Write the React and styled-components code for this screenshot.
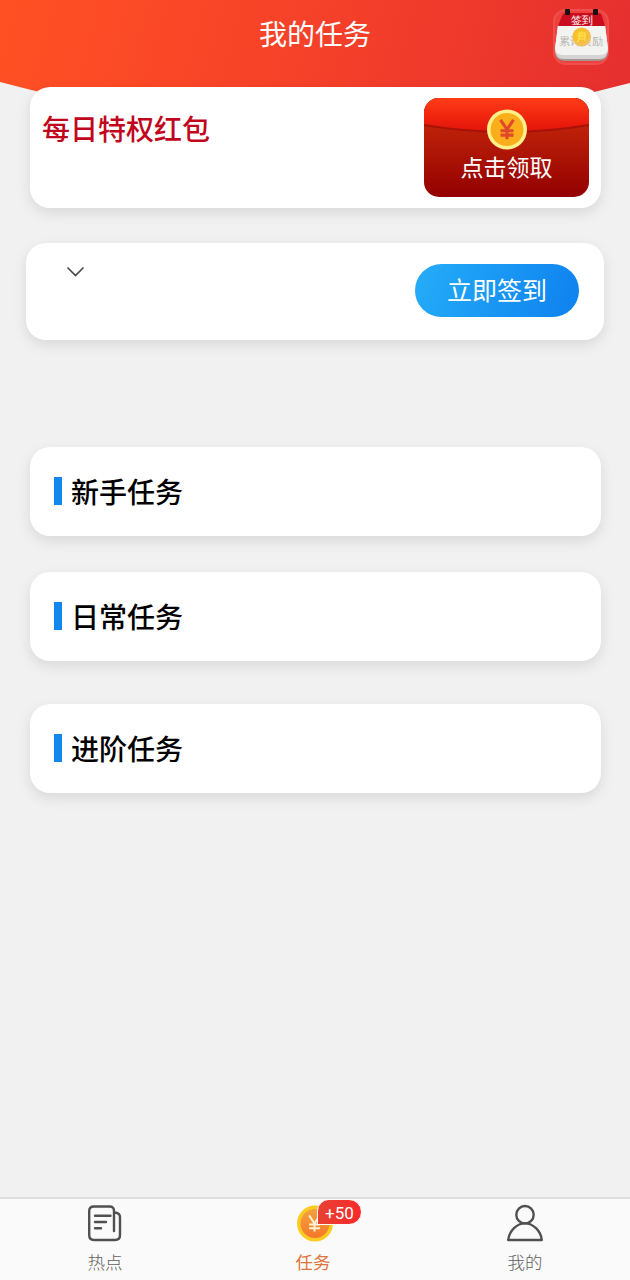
import React from 'react';
import styled, { createGlobalStyle } from 'styled-components';

const GlobalStyle = createGlobalStyle`
  * {
    box-sizing: border-box;
  }

  body {
    margin: 0;
    background: #f1f1f1;
    font-family: Roboto, "Noto Sans CJK SC", sans-serif;
  }
`;

const Page = styled.div`
  display: flex;
  flex-direction: column;
  height: 1280px;
  background: #f1f1f1;
  overflow: hidden;
`;

const Header = styled.header`
  position: relative;
  flex: none;
  display: flex;
  justify-content: center;
  height: 87px;
  padding-top: 15px;
`;

const HeaderBackdrop = styled.svg`
  position: absolute;
  top: 0;
  left: 0;
`;

const HeaderTitle = styled.h1`
  position: relative;
  margin: 0;
  color: #fff;
  font-size: 28px;
  line-height: 41px;
  font-weight: 400;
`;

const CalendarButton = styled.button`
  position: absolute;
  top: 6px;
  right: 19px;
  padding: 0;
  border: none;
  background: none;
  line-height: 0;
`;

const Content = styled.main`
  position: relative;
  flex: 1;
  display: flex;
  flex-direction: column;
`;

const Card = styled.section`
  display: flex;
  background: #fff;
  border-radius: 20px;
  box-shadow: 0 5px 14px rgba(0, 0, 0, 0.1);
`;

const RedPacketCard = styled(Card)`
  justify-content: space-between;
  height: 121px;
  margin: 0 29px 0 30px;
  padding: 11px 12px;
`;

const RedPacketTitle = styled.h2`
  margin: 12px 0 0;
  color: #c1071e;
  font-size: 28px;
  line-height: 41px;
  font-weight: 500;
`;

const RedPacketButton = styled.button`
  position: relative;
  display: flex;
  flex-direction: column;
  align-items: center;
  width: 165px;
  height: 99px;
  padding: 11px 0 0;
  border: none;
  border-radius: 15px;
  background: linear-gradient(#bd2109 30%, #930000);
  color: #fff;
  font-family: inherit;
  font-size: 23px;
  line-height: 34px;
  overflow: hidden;
`;

const PacketFlap = styled.svg`
  position: absolute;
  top: 0;
  left: 0;
`;

const PacketCoin = styled.svg`
  position: relative;
  flex: none;
`;

const PacketLabel = styled.span`
  position: relative;
  margin-top: 2px;
`;

const SignCard = styled(Card)`
  justify-content: space-between;
  height: 97px;
  margin: 35px 26px 0;
  padding: 21px 25px 0 40px;
`;

const SignButton = styled.button`
  width: 164px;
  height: 53px;
  padding: 3px 0 0;
  border: none;
  border-radius: 27px;
  background: linear-gradient(110deg, #24abf8 5%, #1085ef 90%);
  color: #fff;
  font-family: inherit;
  font-size: 25px;
  line-height: 50px;
`;

const TaskCard = styled(Card)`
  align-items: flex-start;
  height: 89px;
  margin: ${props => props.$gap}px 29px 0 30px;
  padding: 27px 0 0 24px;
`;

const TaskMarker = styled.span`
  width: 8px;
  height: 28px;
  margin: 3px 9px 0 0;
  background: #1487ee;
`;

const TaskTitle = styled.h2`
  margin: 0;
  color: #000;
  font-size: 28px;
  line-height: 40px;
  font-weight: 500;
`;

const TabBar = styled.nav`
  flex: none;
  display: grid;
  grid-template-columns: repeat(3, 1fr);
  height: 83px;
  border-top: 2px solid #dedede;
  background: #fafafa;
`;

const Tab = styled.a`
  display: flex;
  flex-direction: column;
  align-items: center;
  padding-top: 5px;
  color: ${props => (props.$active ? '#e0733a' : '#606060')};
  font-size: 17.5px;
  line-height: 26px;
  font-weight: ${props => (props.$active ? 400 : 300)};
`;

const TabIcon = styled.div`
  position: relative;
  height: 46px;
  line-height: 0;
`;

const TabLabel = styled.span`
  position: relative;
  left: ${props => props.$shift || 0}px;
`;

const Badge = styled.span`
  position: absolute;
  top: -5px;
  left: 21px;
  width: 45px;
  height: 26px;
  border: 1px solid #fafafa;
  border-radius: 12px 13px 13px 0;
  background: linear-gradient(100deg, #e64133, #fb2a2a);
  color: #fff;
  font-size: 17px;
  line-height: 26px;
  text-align: center;
`;

const CalendarIcon = () => (
  <svg width="60" height="60" viewBox="0 0 60 60">
    <defs>
      <radialGradient id="calendarCoin" cx="0.45" cy="0.4">
        <stop offset="0" stopColor="#ffd42a" />
        <stop offset="0.65" stopColor="#f6bd2c" />
        <stop offset="1" stopColor="#f0c25e" />
      </radialGradient>
    </defs>
    <rect x="3" y="4" width="54" height="54" rx="12" fill="#ee403d" stroke="#ef504d" strokeWidth="2" />
    <path d="M4 44 Q4 55 13 55 H48 Q57 55 57 44 Z" fill="#a39592" />
    <path d="M7 19 H54 L57 43 Q57 53 48 53 H13 Q4 53 4 43 Z" fill="#d6d4d2" />
    <path d="M7 19 H54 L57 42 Q57 49 49 49 H12 Q4 49 4 42 Z" fill="#f3f3f1" />
    <path d="M15 7 H47 Q50 7 51 10 L54 20 H7 L11 10 Q12 7 15 7 Z" fill="#c90d1e" />
    <rect x="14" y="3" width="5" height="6" rx="1" fill="#171313" />
    <rect x="42" y="3" width="5" height="6" rx="1" fill="#171313" />
    <text x="31" y="18" textAnchor="middle" fontSize="10.5" fontWeight="500" fill="#fff">签到</text>
    <text x="30" y="38.5" textAnchor="middle" fontSize="11.4" fill="#b4b2b0">累计奖励</text>
    <circle cx="30.7" cy="31" r="9.5" fill="url(#calendarCoin)" />
    <path d="M28 27 H34 V35 M28 27 V32 Q28 35 26 36 M28 30 H34 M28 33 H34" fill="none" stroke="#ffe15c" strokeWidth="1.1" />
  </svg>
);

const YuanMark = ({ color, width = 2.5 }) => (
  <path
    d="M-6 -9 L0 0 L6 -9 M0 -1 V9 M-6 1.2 H6 M-6 5.2 H6"
    fill="none"
    stroke={color}
    strokeWidth={width}
    strokeLinejoin="bevel"
  />
);

const NewsIcon = () => (
  <svg width="36" height="38" viewBox="0 0 36 38" fill="none" stroke="#505052" strokeWidth="2.4" strokeLinecap="round">
    <path d="M27 27 V7 Q27 2.5 22.5 2.5 H7 Q2.2 2.5 2.2 7 V31 Q2.2 36 7 36 H28 Q33 36 33 31 V13 Q33 9 27.5 8.5" />
    <path d="M8 11.7 H23.5 M8 18 H19 M8 24.3 H14" />
  </svg>
);

const CoinIcon = () => (
  <svg width="38" height="38" viewBox="0 0 38 38">
    <defs>
      <linearGradient id="tabCoin" x1="0" y1="0" x2="0" y2="1">
        <stop offset="0" stopColor="#f4a23c" />
        <stop offset="1" stopColor="#f4782b" />
      </linearGradient>
    </defs>
    <circle cx="19" cy="19.5" r="18" fill="#fbcb22" />
    <circle cx="19" cy="19.5" r="14.5" fill="url(#tabCoin)" />
    <g transform="translate(18.5 19.5) scale(0.9)">
      <YuanMark color="#fff3d4" width={2.2} />
    </g>
  </svg>
);

const PersonIcon = () => (
  <svg width="38" height="38" viewBox="0 0 38 38" fill="none" stroke="#505052" strokeWidth="2.4" strokeLinejoin="round">
    <circle cx="19" cy="10.7" r="8.7" />
    <path d="M2.2 36 Q3 29 8 24.2 Q13 19.4 19 19.4 Q25 19.4 30 24.2 Q35 29 35.8 36 Z" />
  </svg>
);

const tasks = [
  { title: '新手任务', gap: 107 },
  { title: '日常任务', gap: 36 },
  { title: '进阶任务', gap: 43 },
];

const App = () => (
  <>
    <GlobalStyle />
    <Page>
      <Header>
        <HeaderBackdrop width="630" height="130" viewBox="0 0 630 130">
          <defs>
            <linearGradient id="header" gradientUnits="userSpaceOnUse" x1="10" y1="0" x2="590" y2="160">
              <stop offset="0" stopColor="#ff5024" />
              <stop offset="0.5" stopColor="#f54129" />
              <stop offset="1" stopColor="#e6302f" />
            </linearGradient>
          </defs>
          <path d="M0 0 H630 V83 Q470 125 315 125 Q160 125 0 82 Z" fill="url(#header)" />
        </HeaderBackdrop>
        <HeaderTitle>我的任务</HeaderTitle>
        <CalendarButton aria-label="签到">
          <CalendarIcon />
        </CalendarButton>
      </Header>

      <Content>
        <RedPacketCard>
          <RedPacketTitle>每日特权红包</RedPacketTitle>
          <RedPacketButton>
            <PacketFlap width="165" height="44" viewBox="0 0 165 44">
              <defs>
                <linearGradient id="flap" x1="0" y1="0" x2="0" y2="1">
                  <stop offset="0" stopColor="#ff3d18" />
                  <stop offset="1" stopColor="#e41309" />
                </linearGradient>
              </defs>
              <path d="M0 28 Q82 42 165 28 V0 H0 Z" fill="#a51308" />
              <path d="M0 26 Q82 40 165 26 V0 H0 Z" fill="url(#flap)" />
            </PacketFlap>
            <PacketCoin width="40" height="41" viewBox="0 0 40 41">
              <circle cx="20" cy="20.5" r="20" fill="#fff08a" />
              <circle cx="20" cy="20.5" r="16.5" fill="#fbae1b" />
              <g transform="translate(20 20.5) scale(1.08)">
                <YuanMark color="#df4929" width={2.9} />
              </g>
            </PacketCoin>
            <PacketLabel>点击领取</PacketLabel>
          </RedPacketButton>
        </RedPacketCard>

        <SignCard>
          <svg width="19" height="16" viewBox="0 0 19 16">
            <path d="M1.5 3.5 L9.5 11.5 L17.5 3.5" fill="none" stroke="#4a4a4a" strokeWidth="1.7" />
          </svg>
          <SignButton>立即签到</SignButton>
        </SignCard>

        {tasks.map(task => (
          <TaskCard key={task.title} $gap={task.gap}>
            <TaskMarker />
            <TaskTitle>{task.title}</TaskTitle>
          </TaskCard>
        ))}
      </Content>

      <TabBar>
        <Tab>
          <TabIcon>
            <NewsIcon />
          </TabIcon>
          <TabLabel>热点</TabLabel>
        </Tab>
        <Tab $active>
          <TabIcon>
            <CoinIcon />
            <Badge>+50</Badge>
          </TabIcon>
          <TabLabel $shift={-2}>任务</TabLabel>
        </Tab>
        <Tab>
          <TabIcon>
            <PersonIcon />
          </TabIcon>
          <TabLabel>我的</TabLabel>
        </Tab>
      </TabBar>
    </Page>
  </>
);

export default App;
